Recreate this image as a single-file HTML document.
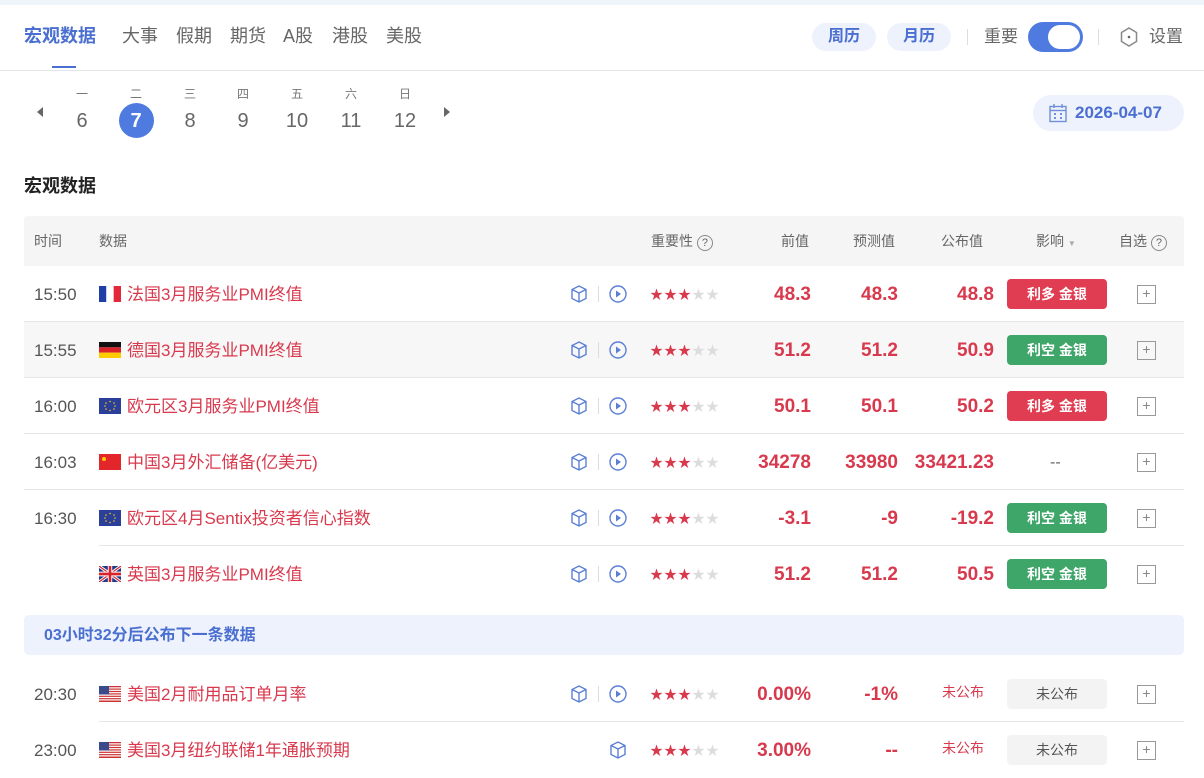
<!DOCTYPE html>
<html><head><meta charset="utf-8"><style>
*{box-sizing:border-box;margin:0;padding:0}
body{width:1204px;height:777px;overflow:hidden;background:#fff;font-family:"Liberation Sans","Noto Sans CJK SC",sans-serif;position:relative;color:#333;line-height:1.2}
.a{position:absolute;white-space:nowrap}
.topbar{left:0;top:0;width:1204px;height:5px;background:#eef5fb}
.tab{top:26px;font-size:18px;color:#666}
.num{font-family:"Liberation Sans Narrow","Liberation Sans",sans-serif;font-stretch:condensed}
.pill{top:23px;height:28px;border-radius:14px;background:#eef2fc;color:#4a6fd0;font-weight:bold;font-size:16px;line-height:28px;text-align:center}
.wd{top:87px;font-size:12px;color:#777;width:30px;text-align:center}
.dn{top:109px;font-size:20px;color:#666;width:36px;text-align:center}
.row{position:absolute;left:24px;width:1160px;height:56px}
.t{position:absolute;left:10px;top:19px;font-size:17px;color:#555}
.flag{position:absolute;left:75px;top:20px;width:22px;height:16px}
.nm{position:absolute;left:103px;top:19px;font-size:17px;color:#d8394d}
.v{position:absolute;top:18px;font-size:19px;color:#d8394d;text-align:right;font-weight:bold}
.badge{position:absolute;left:983px;top:13px;width:100px;height:30px;border-radius:4px;color:#fff;font-size:14px;font-weight:bold;line-height:30px;text-align:center}
.plus{position:absolute;left:1113px;top:19px;width:19px;height:19px;border:1.5px solid #999;color:#888;font-size:14px;line-height:15px;text-align:center}
.stars{position:absolute;left:626px;top:21px;font-size:13px;letter-spacing:1px;color:#d8394d}
.stars i{font-style:normal;color:#ddd}
.sep{position:absolute;height:1px;background:#e6e6e6;bottom:0;right:0}
.ic{position:absolute;top:18px}
.th{position:absolute;top:17px;font-size:14px;color:#666}
</style></head><body>
<div class="a topbar"></div>
<div class="a tab" style="left:24px;color:#4a6fd0;font-weight:bold">宏观数据</div>
<div class="a tab" style="left:122px">大事</div>
<div class="a tab" style="left:176px">假期</div>
<div class="a tab" style="left:230px">期货</div>
<div class="a tab" style="left:283px">A股</div>
<div class="a tab" style="left:332px">港股</div>
<div class="a tab" style="left:386px">美股</div>
<div class="a" style="left:52px;top:66px;width:24px;height:2px;background:#4a6fd0"></div>
<div class="a" style="left:0;top:70px;width:1204px;height:1px;background:#e6e6e6"></div>
<div class="a pill" style="left:812px;width:64px">周历</div>
<div class="a pill" style="left:887px;width:64px">月历</div>
<div class="a" style="left:967px;top:29px;width:1px;height:16px;background:#ddd"></div>
<div class="a" style="left:984px;top:27px;font-size:17px;color:#666">重要</div>
<div class="a" style="left:1028px;top:22px;width:55px;height:30px;border-radius:15px;background:#4f7be0"><div style="position:absolute;right:3px;top:3px;width:32px;height:24px;border-radius:12px;background:#fff"></div></div>
<div class="a" style="left:1098px;top:29px;width:1px;height:16px;background:#ddd"></div>
<svg class="a" style="left:1119px;top:26px" width="20" height="22" viewBox="0 0 20 22"><path d="M10 2L17.5 6.5V15.5L10 20L2.5 15.5V6.5Z" fill="none" stroke="#888" stroke-width="1.5"/><circle cx="10" cy="11" r="1.3" fill="#666"/></svg>
<div class="a" style="left:1149px;top:27px;font-size:17px;color:#666">设置</div>

<div class="a" style="left:37px;top:107px;width:0;height:0;border-top:5px solid transparent;border-bottom:5px solid transparent;border-right:6px solid #666"></div>
<div class="a" style="left:444px;top:107px;width:0;height:0;border-top:5px solid transparent;border-bottom:5px solid transparent;border-left:6px solid #666"></div>
<div class="a wd" style="left:67px">一</div><div class="a wd" style="left:121px">二</div><div class="a wd" style="left:175px">三</div><div class="a wd" style="left:228px">四</div><div class="a wd" style="left:282px">五</div><div class="a wd" style="left:336px">六</div><div class="a wd" style="left:390px">日</div>
<div class="a" style="left:119px;top:103px;width:35px;height:35px;border-radius:50%;background:#4f7be0"></div>
<div class="a dn num" style="left:64px">6</div><div class="a dn num" style="left:118px;color:#fff;font-weight:bold">7</div><div class="a dn num" style="left:172px">8</div><div class="a dn num" style="left:225px">9</div><div class="a dn num" style="left:279px">10</div><div class="a dn num" style="left:333px">11</div><div class="a dn num" style="left:387px">12</div>
<div class="a" style="left:1033px;top:95px;width:151px;height:36px;border-radius:18px;background:#eef2fc"></div>
<svg class="a" style="left:1048px;top:103px" width="20" height="20" viewBox="0 0 20 20"><rect x="2" y="3.5" width="16" height="15" fill="none" stroke="#6f8fd8" stroke-width="1.4"/><line x1="2" y1="7.5" x2="18" y2="7.5" stroke="#6f8fd8" stroke-width="1.4"/><line x1="6" y1="1" x2="6" y2="5" stroke="#6f8fd8" stroke-width="1.4"/><line x1="14" y1="1" x2="14" y2="5" stroke="#6f8fd8" stroke-width="1.4"/><rect x="6" y="10" width="2" height="2" fill="#6f8fd8"/><rect x="12" y="10" width="2" height="2" fill="#6f8fd8"/><rect x="6" y="14" width="2" height="2" fill="#6f8fd8"/><rect x="12" y="14" width="2" height="2" fill="#6f8fd8"/></svg>
<div class="a" style="left:1075px;top:103px;font-size:17px;font-weight:bold;color:#4a6fd0">2026-04-07</div>

<div class="a" style="left:24px;top:176px;font-size:18px;font-weight:bold;color:#222">宏观数据</div>

<div class="row" style="top:216px;height:50px;background:#f5f5f5;border-radius:4px 4px 0 0">
<div class="th" style="left:10px">时间</div><div class="th" style="left:75px">数据</div>
<div class="th" style="left:627px">重要性 <span style="display:inline-block;width:16px;height:16px;border:1px solid #888;border-radius:50%;font-size:11px;line-height:14px;text-align:center">?</span></div>
<div class="th" style="left:757px">前值</div><div class="th" style="left:829px">预测值</div><div class="th" style="left:917px">公布值</div>
<div class="th" style="left:1012px">影响 <span style="font-size:8px;color:#aaa">▼</span></div>
<div class="th" style="left:1095px">自选 <span style="display:inline-block;width:16px;height:16px;border:1px solid #888;border-radius:50%;font-size:11px;line-height:14px;text-align:center">?</span></div>
</div>

<div class="row" style="top:266px">
<div class="t num">15:50</div>
<svg class="flag" viewBox="0 0 3 2" preserveAspectRatio="none"><rect width="1" height="2" fill="#1f3fa8"/><rect x="1" width="1" height="2" fill="#fff"/><rect x="2" width="1" height="2" fill="#e3283b"/></svg>
<div class="nm">法国3月服务业PMI终值</div>
<svg class="ic" style="left:545px" width="20" height="20" viewBox="0 0 20 20"><path d="M10 2L17 5.5V14.5L10 18L3 14.5V5.5Z M3 5.5L10 9L17 5.5 M10 9V18" fill="none" stroke="#5b7fd6" stroke-width="1.4"/></svg>
<div class="a" style="left:574px;top:20px;width:1px;height:16px;background:#ddd"></div>
<svg class="ic" style="left:584px" width="20" height="20" viewBox="0 0 20 20"><circle cx="10" cy="10" r="8" fill="none" stroke="#5b7fd6" stroke-width="1.4"/><path d="M8 6.5L13 10L8 13.5Z" fill="#5b7fd6"/></svg>
<div class="stars">★★★<i>★★</i></div>
<div class="v num" style="right:373px">48.3</div><div class="v num" style="right:286px">48.3</div><div class="v num" style="right:190px">48.8</div>
<div class="badge" style="background:#e03c52">利多 金银</div><div class="plus">+</div>
<div class="sep" style="left:0"></div></div>

<div class="row" style="top:322px;background:#f7f7f7">
<div class="t num">15:55</div>
<svg class="flag" viewBox="0 0 3 3" preserveAspectRatio="none"><rect width="3" height="1" fill="#111"/><rect y="1" width="3" height="1" fill="#d8232a"/><rect y="2" width="3" height="1" fill="#fc0"/></svg>
<div class="nm">德国3月服务业PMI终值</div>
<svg class="ic" style="left:545px" width="20" height="20" viewBox="0 0 20 20"><path d="M10 2L17 5.5V14.5L10 18L3 14.5V5.5Z M3 5.5L10 9L17 5.5 M10 9V18" fill="none" stroke="#5b7fd6" stroke-width="1.4"/></svg>
<div class="a" style="left:574px;top:20px;width:1px;height:16px;background:#ddd"></div>
<svg class="ic" style="left:584px" width="20" height="20" viewBox="0 0 20 20"><circle cx="10" cy="10" r="8" fill="none" stroke="#5b7fd6" stroke-width="1.4"/><path d="M8 6.5L13 10L8 13.5Z" fill="#5b7fd6"/></svg>
<div class="stars">★★★<i>★★</i></div>
<div class="v num" style="right:373px">51.2</div><div class="v num" style="right:286px">51.2</div><div class="v num" style="right:190px">50.9</div>
<div class="badge" style="background:#3fa66a">利空 金银</div><div class="plus">+</div>
<div class="sep" style="left:0"></div></div>

<div class="row" style="top:378px">
<div class="t num">16:00</div>
<svg class="flag" viewBox="0 0 22 16" preserveAspectRatio="none"><rect width="22" height="16" fill="#2a3f9a"/><g fill="#fc0"><circle cx="11" cy="3.5" r=".8"/><circle cx="15" cy="5" r=".8"/><circle cx="16" cy="8" r=".8"/><circle cx="15" cy="11" r=".8"/><circle cx="11" cy="12.5" r=".8"/><circle cx="7" cy="11" r=".8"/><circle cx="6" cy="8" r=".8"/><circle cx="7" cy="5" r=".8"/></g></svg>
<div class="nm">欧元区3月服务业PMI终值</div>
<svg class="ic" style="left:545px" width="20" height="20" viewBox="0 0 20 20"><path d="M10 2L17 5.5V14.5L10 18L3 14.5V5.5Z M3 5.5L10 9L17 5.5 M10 9V18" fill="none" stroke="#5b7fd6" stroke-width="1.4"/></svg>
<div class="a" style="left:574px;top:20px;width:1px;height:16px;background:#ddd"></div>
<svg class="ic" style="left:584px" width="20" height="20" viewBox="0 0 20 20"><circle cx="10" cy="10" r="8" fill="none" stroke="#5b7fd6" stroke-width="1.4"/><path d="M8 6.5L13 10L8 13.5Z" fill="#5b7fd6"/></svg>
<div class="stars">★★★<i>★★</i></div>
<div class="v num" style="right:373px">50.1</div><div class="v num" style="right:286px">50.1</div><div class="v num" style="right:190px">50.2</div>
<div class="badge" style="background:#e03c52">利多 金银</div><div class="plus">+</div>
<div class="sep" style="left:0"></div></div>

<div class="row" style="top:434px">
<div class="t num">16:03</div>
<svg class="flag" viewBox="0 0 22 16" preserveAspectRatio="none"><rect width="22" height="16" fill="#e3262a"/><circle cx="5" cy="5" r="2" fill="#fc0"/></svg>
<div class="nm">中国3月外汇储备(亿美元)</div>
<svg class="ic" style="left:545px" width="20" height="20" viewBox="0 0 20 20"><path d="M10 2L17 5.5V14.5L10 18L3 14.5V5.5Z M3 5.5L10 9L17 5.5 M10 9V18" fill="none" stroke="#5b7fd6" stroke-width="1.4"/></svg>
<div class="a" style="left:574px;top:20px;width:1px;height:16px;background:#ddd"></div>
<svg class="ic" style="left:584px" width="20" height="20" viewBox="0 0 20 20"><circle cx="10" cy="10" r="8" fill="none" stroke="#5b7fd6" stroke-width="1.4"/><path d="M8 6.5L13 10L8 13.5Z" fill="#5b7fd6"/></svg>
<div class="stars">★★★<i>★★</i></div>
<div class="v num" style="right:373px">34278</div><div class="v num" style="right:286px">33980</div><div class="v num" style="right:190px">33421.23</div>
<div class="a" style="left:1026px;top:19px;font-size:16px;color:#666">--</div><div class="plus">+</div>
<div class="sep" style="left:0"></div></div>

<div class="row" style="top:490px">
<div class="t num">16:30</div>
<svg class="flag" viewBox="0 0 22 16" preserveAspectRatio="none"><rect width="22" height="16" fill="#2a3f9a"/><g fill="#fc0"><circle cx="11" cy="3.5" r=".8"/><circle cx="15" cy="5" r=".8"/><circle cx="16" cy="8" r=".8"/><circle cx="15" cy="11" r=".8"/><circle cx="11" cy="12.5" r=".8"/><circle cx="7" cy="11" r=".8"/><circle cx="6" cy="8" r=".8"/><circle cx="7" cy="5" r=".8"/></g></svg>
<div class="nm">欧元区4月Sentix投资者信心指数</div>
<svg class="ic" style="left:545px" width="20" height="20" viewBox="0 0 20 20"><path d="M10 2L17 5.5V14.5L10 18L3 14.5V5.5Z M3 5.5L10 9L17 5.5 M10 9V18" fill="none" stroke="#5b7fd6" stroke-width="1.4"/></svg>
<div class="a" style="left:574px;top:20px;width:1px;height:16px;background:#ddd"></div>
<svg class="ic" style="left:584px" width="20" height="20" viewBox="0 0 20 20"><circle cx="10" cy="10" r="8" fill="none" stroke="#5b7fd6" stroke-width="1.4"/><path d="M8 6.5L13 10L8 13.5Z" fill="#5b7fd6"/></svg>
<div class="stars">★★★<i>★★</i></div>
<div class="v num" style="right:373px">-3.1</div><div class="v num" style="right:286px">-9</div><div class="v num" style="right:190px">-19.2</div>
<div class="badge" style="background:#3fa66a">利空 金银</div><div class="plus">+</div>
<div class="sep" style="left:75px"></div></div>

<div class="row" style="top:546px">
<svg class="flag" viewBox="0 0 60 40" preserveAspectRatio="none"><rect width="60" height="40" fill="#1f3a8a"/><path d="M0 0L60 40M60 0L0 40" stroke="#fff" stroke-width="8"/><path d="M0 0L60 40M60 0L0 40" stroke="#d8232a" stroke-width="3"/><path d="M30 0V40M0 20H60" stroke="#fff" stroke-width="12"/><path d="M30 0V40M0 20H60" stroke="#d8232a" stroke-width="7"/></svg>
<div class="nm">英国3月服务业PMI终值</div>
<svg class="ic" style="left:545px" width="20" height="20" viewBox="0 0 20 20"><path d="M10 2L17 5.5V14.5L10 18L3 14.5V5.5Z M3 5.5L10 9L17 5.5 M10 9V18" fill="none" stroke="#5b7fd6" stroke-width="1.4"/></svg>
<div class="a" style="left:574px;top:20px;width:1px;height:16px;background:#ddd"></div>
<svg class="ic" style="left:584px" width="20" height="20" viewBox="0 0 20 20"><circle cx="10" cy="10" r="8" fill="none" stroke="#5b7fd6" stroke-width="1.4"/><path d="M8 6.5L13 10L8 13.5Z" fill="#5b7fd6"/></svg>
<div class="stars">★★★<i>★★</i></div>
<div class="v num" style="right:373px">51.2</div><div class="v num" style="right:286px">51.2</div><div class="v num" style="right:190px">50.5</div>
<div class="badge" style="background:#3fa66a">利空 金银</div><div class="plus">+</div>
</div>

<div class="a" style="left:24px;top:615px;width:1160px;height:40px;background:#eef2fc;border-radius:5px"></div>
<div class="a" style="left:44px;top:626px;font-size:16px;font-weight:bold;color:#4a6fd0">03小时32分后公布下一条数据</div>

<div class="row" style="top:666px">
<div class="t num">20:30</div>
<svg class="flag" viewBox="0 0 22 16" preserveAspectRatio="none"><rect width="22" height="16" fill="#c33"/><g fill="#fff"><rect y="1.3" width="22" height="1.2"/><rect y="3.7" width="22" height="1.2"/><rect y="6.1" width="22" height="1.2"/><rect y="8.5" width="22" height="1.2"/><rect y="10.9" width="22" height="1.2"/><rect y="13.3" width="22" height="1.2"/></g><rect width="10" height="8.5" fill="#3a4b8c"/></svg>
<div class="nm">美国2月耐用品订单月率</div>
<svg class="ic" style="left:545px" width="20" height="20" viewBox="0 0 20 20"><path d="M10 2L17 5.5V14.5L10 18L3 14.5V5.5Z M3 5.5L10 9L17 5.5 M10 9V18" fill="none" stroke="#5b7fd6" stroke-width="1.4"/></svg>
<div class="a" style="left:574px;top:20px;width:1px;height:16px;background:#ddd"></div>
<svg class="ic" style="left:584px" width="20" height="20" viewBox="0 0 20 20"><circle cx="10" cy="10" r="8" fill="none" stroke="#5b7fd6" stroke-width="1.4"/><path d="M8 6.5L13 10L8 13.5Z" fill="#5b7fd6"/></svg>
<div class="stars">★★★<i>★★</i></div>
<div class="v num" style="right:373px">0.00%</div><div class="v num" style="right:286px">-1%</div>
<div class="a" style="left:918px;top:18px;font-size:14px;color:#d8394d">未公布</div>
<div class="badge" style="background:#f3f3f3;color:#555;font-weight:normal">未公布</div><div class="plus">+</div>
<div class="sep" style="left:75px"></div></div>

<div class="row" style="top:722px">
<div class="t num">23:00</div>
<svg class="flag" viewBox="0 0 22 16" preserveAspectRatio="none"><rect width="22" height="16" fill="#c33"/><g fill="#fff"><rect y="1.3" width="22" height="1.2"/><rect y="3.7" width="22" height="1.2"/><rect y="6.1" width="22" height="1.2"/><rect y="8.5" width="22" height="1.2"/><rect y="10.9" width="22" height="1.2"/><rect y="13.3" width="22" height="1.2"/></g><rect width="10" height="8.5" fill="#3a4b8c"/></svg>
<div class="nm">美国3月纽约联储1年通胀预期</div>
<svg class="ic" style="left:584px" width="20" height="20" viewBox="0 0 20 20"><path d="M10 2L17 5.5V14.5L10 18L3 14.5V5.5Z M3 5.5L10 9L17 5.5 M10 9V18" fill="none" stroke="#5b7fd6" stroke-width="1.4"/></svg>
<div class="stars">★★★<i>★★</i></div>
<div class="v num" style="right:373px">3.00%</div><div class="v num" style="right:286px">--</div>
<div class="a" style="left:918px;top:18px;font-size:14px;color:#d8394d">未公布</div>
<div class="badge" style="background:#f3f3f3;color:#555;font-weight:normal">未公布</div><div class="plus">+</div>
</div>
</body></html>
